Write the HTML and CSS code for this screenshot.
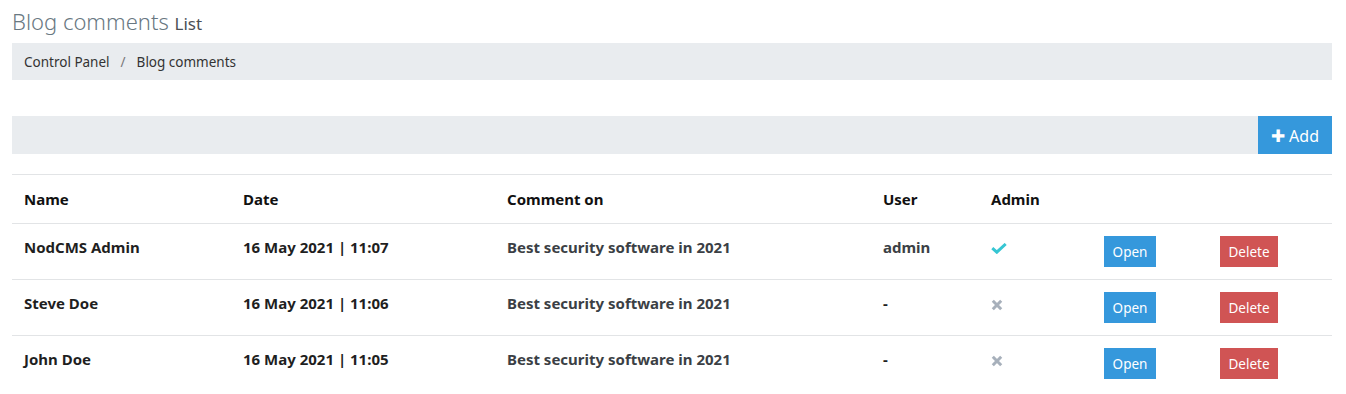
FILE: index.html
```html
<!DOCTYPE html>
<html lang="en">
  <head>
    <meta charset="UTF-8" />
    <title>Blog comments List</title>
    <link rel="stylesheet" href="styles.css">
  </head>
  <body>
    <div class="page">
      <h1 class="page-title">Blog comments <small>List</small></h1>
      <div class="breadcrumb">
        <span>Control Panel</span>
        <span class="sep">/</span>
        <span class="current">Blog comments</span>
      </div>

      <div class="toolbar">
        <button class="btn-add"><span class="plus">&#10010;</span> Add</button>
      </div>

      <table class="list">
        <thead>
          <tr>
            <th class="c-name">Name</th>
            <th class="c-date">Date</th>
            <th class="c-comment">Comment on</th>
            <th class="c-user">User</th>
            <th class="c-admin">Admin</th>
            <th class="c-open"></th>
            <th class="c-delete"></th>
          </tr>
        </thead>
        <tbody>
          <tr>
            <td>NodCMS Admin</td>
            <td>16 May 2021 | 11:07</td>
            <td class="muted">Best security software in 2021</td>
            <td class="muted">admin</td>
            <td>
              <svg class="icon-yes" width="16" height="11" viewBox="0 0 16 11"><path d="M1.3 5.2 L5.8 9.2 L14.7 1" fill="none" stroke="#36c6d3" stroke-width="3"/></svg>
            </td>
            <td><button class="btn btn-open">Open</button></td>
            <td><button class="btn btn-delete">Delete</button></td>
          </tr>
          <tr>
            <td>Steve Doe</td>
            <td>16 May 2021 | 11:06</td>
            <td class="muted">Best security software in 2021</td>
            <td>-</td>
            <td>
              <svg class="icon-no" width="12" height="12" viewBox="0 0 12 12"><path d="M1.8 1.8 L10.2 10.2 M10.2 1.8 L1.8 10.2" stroke="#a7b0bb" stroke-width="3"/></svg>
            </td>
            <td><button class="btn btn-open">Open</button></td>
            <td><button class="btn btn-delete">Delete</button></td>
          </tr>
          <tr>
            <td>John Doe</td>
            <td>16 May 2021 | 11:05</td>
            <td class="muted">Best security software in 2021</td>
            <td>-</td>
            <td>
              <svg class="icon-no" width="12" height="12" viewBox="0 0 12 12"><path d="M1.8 1.8 L10.2 10.2 M10.2 1.8 L1.8 10.2" stroke="#a7b0bb" stroke-width="3"/></svg>
            </td>
            <td><button class="btn btn-open">Open</button></td>
            <td><button class="btn btn-delete">Delete</button></td>
          </tr>
        </tbody>
      </table>
    </div>
  </body>
</html>
```

FILE: styles.css
```css
body {
  margin: 0;
  padding: 0;
  background-color: #fff;
  font-family: "Noto Sans", "Open Sans", Arial, sans-serif;
  color: #1f1f1f;
}
.page {
  padding: 7px 14px 0 12px;
}
.page-title {
  margin: 0 0 5px;
  font-size: 22px;
  font-weight: 300;
  color: #697882;
  line-height: 29px;
}
.page-title small {
  font-size: 17px;
  font-weight: 400;
  color: #4b4f55;
}
.breadcrumb {
  background-color: #e9ecef;
  height: 37px;
  display: flex;
  align-items: center;
  padding: 0 12px;
  font-size: 13.5px;
  color: #333;
}
.breadcrumb .sep {
  color: #777;
  margin: 0 11px;
}
.toolbar {
  margin-top: 36px;
  background-color: #e9ecef;
  height: 38px;
  display: flex;
  justify-content: flex-end;
}
.btn-add {
  background-color: #3598dc;
  color: #fff;
  border: 0;
  width: 74px;
  font-family: inherit;
  font-size: 16px;
  padding: 0;
  cursor: pointer;
}
.btn-add .plus {
  font-size: 17px;
}
.list {
  margin-top: 20px;
  width: 100%;
  border-collapse: collapse;
  font-size: 15px;
  font-weight: 700;
  table-layout: fixed;
}
.list th,
.list td {
  text-align: left;
  padding: 0 12px;
  border-top: 1px solid #e2e4e6;
}
.list th {
  height: 48px;
  color: #111;
}
.list td {
  height: 56px;
  box-sizing: border-box;
  vertical-align: top;
  padding-top: 12px;
  line-height: 22px;
}
.list td.muted {
  color: #3b3f45;
}
.c-name { width: 195px; }
.c-date { width: 240px; }
.c-comment { width: 352px; }
.c-user { width: 84px; }
.c-admin { width: 89px; }
.c-open { width: 92px; }
.icon-yes,
.icon-no {
  display: block;
  margin-top: 7px;
}
.btn {
  display: block;
  border: 0;
  color: #fff;
  font-family: inherit;
  font-size: 13.5px;
  height: 31px;
  padding: 0;
  cursor: pointer;
}
.btn-open {
  background-color: #3598dc;
  width: 52px;
}
.btn-delete {
  background-color: #d05454;
  width: 58px;
}
```
